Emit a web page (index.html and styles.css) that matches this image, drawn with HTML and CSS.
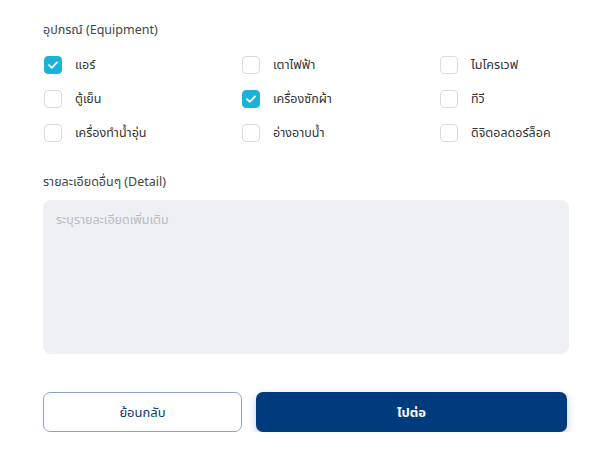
FILE: index.html
```html
<!DOCTYPE html>
<html lang="th">
<head>
<meta charset="utf-8">
<link rel="stylesheet" href="styles.css">
</head>
<body>
<div class="page">
  <div class="section-title">อุปกรณ์ (Equipment)</div>
  <div class="grid">
    <label class="item"><span class="box checked"><svg viewBox="0 0 18 18" width="18" height="18"><path d="M4.5 9.2 L7.6 12.2 L13.5 6" fill="none" stroke="#fff" stroke-width="2" stroke-linecap="round" stroke-linejoin="round"/></svg></span><span class="lbl">แอร์</span></label>
    <label class="item"><span class="box"></span><span class="lbl">เตาไฟฟ้า</span></label>
    <label class="item"><span class="box"></span><span class="lbl">ไมโครเวฟ</span></label>
    <label class="item"><span class="box"></span><span class="lbl">ตู้เย็น</span></label>
    <label class="item"><span class="box checked"><svg viewBox="0 0 18 18" width="18" height="18"><path d="M4.5 9.2 L7.6 12.2 L13.5 6" fill="none" stroke="#fff" stroke-width="2" stroke-linecap="round" stroke-linejoin="round"/></svg></span><span class="lbl">เครื่องซักผ้า</span></label>
    <label class="item"><span class="box"></span><span class="lbl">ทีวี</span></label>
    <label class="item"><span class="box"></span><span class="lbl">เครื่องทำน้ำอุ่น</span></label>
    <label class="item"><span class="box"></span><span class="lbl">อ่างอาบน้ำ</span></label>
    <label class="item"><span class="box"></span><span class="lbl">ดิจิตอลดอร์ล็อค</span></label>
  </div>
  <div class="section-title detail-title">รายละเอียดอื่นๆ (Detail)</div>
  <div class="textarea"><span class="placeholder">ระบุรายละเอียดเพิ่มเติม</span></div>
  <div class="actions">
    <button class="btn btn-back">ย้อนกลับ</button>
    <button class="btn btn-next">ไปต่อ</button>
  </div>
</div>
</body>
</html>
```
FILE: styles.css
```css
html, body {
  margin: 0;
  padding: 0;
  background: #ffffff;
}
body {
  font-family: "Noto Sans", "Noto Sans Thai", "Open Sans", sans-serif;
  color: #3a3a3a;
}
.page {
  padding: 20px 38px 0 43px;
  display: flex;
  flex-direction: column;
}
.section-title {
  font-size: 12.5px;
  line-height: 20px;
  color: #444;
}
.grid {
  margin-top: 16px;
  display: grid;
  grid-template-columns: 198px 198px 1fr;
  row-gap: 16px;
}
.item {
  display: flex;
  align-items: center;
  height: 18px;
  padding-left: 1px;
}
.box {
  width: 16px;
  height: 16px;
  border: 1px solid #dcdcdc;
  border-radius: 4px;
  box-sizing: content-box;
  display: inline-flex;
  align-items: center;
  justify-content: center;
  background: #fff;
  flex: none;
}
.box.checked {
  background: #1cb2d8;
  border-color: #1cb2d8;
}
.box svg { display: block; }
.lbl {
  margin-left: 13px;
  font-size: 12.5px;
  color: #333;
}
.detail-title {
  margin-top: 30px;
}
.textarea {
  margin-top: 8px;
  height: 154px;
  background: #eff0f4;
  border-radius: 8px;
  padding: 7px 13px;
  box-sizing: border-box;
}
.placeholder {
  font-size: 12.5px;
  color: #b9bbc2;
}
.actions {
  margin-top: 38px;
  display: flex;
  gap: 14px;
  padding-right: 2px;
}
.btn {
  height: 40px;
  border-radius: 7px;
  font-family: inherit;
  font-size: 13px;
  padding-top: 2px;
  cursor: pointer;
}
.btn-back {
  width: 199px;
  background: #fff;
  border: 1px solid #8aa6c6;
  color: #0d3a6e;
}
.btn-next {
  flex: 1;
  background: #003b7d;
  border: none;
  color: #fff;
  font-weight: 700;
  box-shadow: 0 3px 8px rgba(0, 59, 125, 0.25);
}
```
